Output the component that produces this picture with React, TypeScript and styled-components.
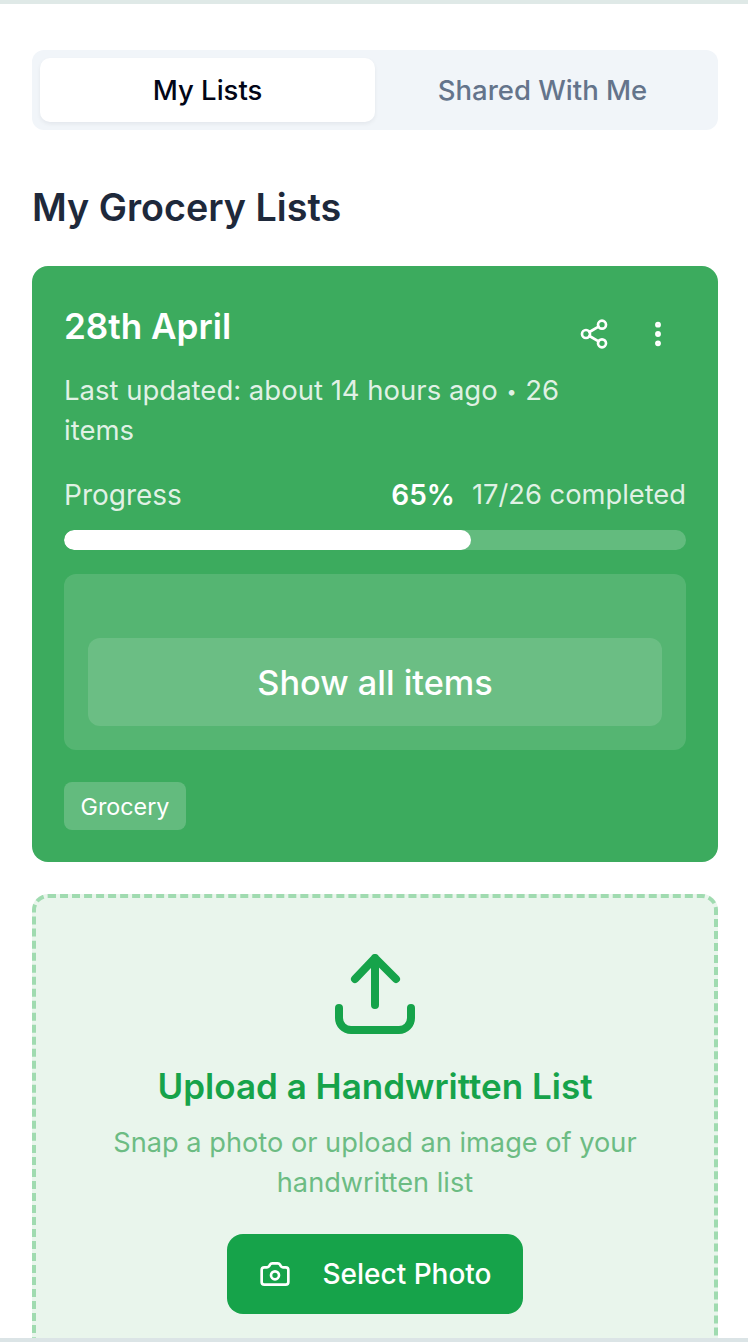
import { createGlobalStyle, styled } from 'styled-components';
import { Camera, EllipsisVertical, Share2 } from 'lucide-react';

const Global = createGlobalStyle`
  html, body {
    margin: 0;
    padding: 0;
    height: 1342px;
    overflow: hidden;
    background: #fff;
  }
  * {
    box-sizing: border-box;
  }
  body {
    font-family: Inter, "Liberation Sans", sans-serif;
  }
`;

export default function App() {
  return (
    <Page>
      <Global />
      <TopEdge />
      <Main>
        <Tabs>
          <Tab $active>My Lists</Tab>
          <Tab>Shared With Me</Tab>
        </Tabs>
        <Heading>My Grocery Lists</Heading>
        <ListCard>
          <CardHead>
            <CardTitle>28th April</CardTitle>
            <CardActions>
              <Share2 size={32} strokeWidth={2} />
              <EllipsisVertical size={32} strokeWidth={2.4} />
            </CardActions>
          </CardHead>
          <Meta>
            Last updated: about 14 hours ago <Dot>•</Dot> 26 items
          </Meta>
          <ProgressRow>
            <span>Progress</span>
            <ProgressStats>
              <strong>65%</strong>
              <span>17/26 completed</span>
            </ProgressStats>
          </ProgressRow>
          <Track>
            <Fill style={{ width: `${(17 / 26) * 100}%` }} />
          </Track>
          <ItemsPanel>
            <ShowAll>Show all items</ShowAll>
          </ItemsPanel>
          <Tag>Grocery</Tag>
        </ListCard>
        <UploadBox>
          <UploadIcon viewBox="0 0 80 80" fill="none">
            <path
              d="M40 51V4M20 25 40 4l21 21"
              stroke="#16a34a"
              strokeWidth="8"
              strokeLinecap="round"
              strokeLinejoin="round"
            />
            <path
              d="M4 54v10a12 12 0 0 0 12 12h48a12 12 0 0 0 12-12V54"
              stroke="#16a34a"
              strokeWidth="8"
              strokeLinecap="round"
            />
          </UploadIcon>
          <UploadTitle>Upload a Handwritten List</UploadTitle>
          <UploadText>Snap a photo or upload an image of your handwritten list</UploadText>
          <PhotoButton>
            <Camera size={32} strokeWidth={2} />
            Select Photo
          </PhotoButton>
        </UploadBox>
      </Main>
      <BottomEdge />
    </Page>
  );
}

const Page = styled.div`
  position: relative;
  width: 748px;
  height: 1342px;
  overflow: hidden;
  background: #fff;
`;
const TopEdge = styled.div`
  height: 4px;
  background: #dfe9e7;
`;
const BottomEdge = styled.div`
  position: absolute;
  left: 0;
  right: 0;
  bottom: 0;
  height: 4px;
  background: #dbe4e6;
`;
const Main = styled.main`
  padding: 46px 30px 0 32px;
`;
const Tabs = styled.div`
  display: grid;
  grid-template-columns: 1fr 1fr;
  height: 80px;
  padding: 8px;
  background: #f1f5f9;
  border-radius: 12px;
`;
const Tab = styled.div<{ $active?: boolean }>`
  display: flex;
  align-items: center;
  justify-content: center;
  border-radius: 10px;
  font-size: 27.5px;
  font-weight: 500;
  color: ${(p) => (p.$active ? '#020617' : '#64748b')};
  background: ${(p) => (p.$active ? '#fff' : 'transparent')};
  box-shadow: ${(p) => (p.$active ? '0 2px 4px rgba(15, 23, 42, 0.06)' : 'none')};
`;
const Heading = styled.h1`
  margin: 52px 0 34px;
  font-size: 37.7px;
  line-height: 50px;
  font-weight: 600;
  color: #1e293b;
`;
const ListCard = styled.section`
  height: 596px;
  padding: 32px;
  background: #3cab5e;
  border-radius: 16px;
  color: #fff;
`;
const CardHead = styled.div`
  display: flex;
  justify-content: space-between;
  align-items: flex-start;
  height: 72px;
`;
const CardTitle = styled.h2`
  margin: 4px 0 0;
  font-size: 35.1px;
  line-height: 48px;
  font-weight: 600;
`;
const CardActions = styled.div`
  display: flex;
  gap: 32px;
  padding: 20px 12px 0 0;
`;
const Meta = styled.p`
  width: 510px;
  margin: 0 0 24px;
  font-size: 27.5px;
  line-height: 40px;
  color: rgba(255, 255, 255, 0.85);
`;
const Dot = styled.span`
  font-size: 18px;
  line-height: 1;
  margin: 0 1px;
  vertical-align: 2px;
`;
const ProgressRow = styled.div`
  display: flex;
  justify-content: space-between;
  align-items: center;
  height: 40px;
  padding-top: 2px;
  font-size: 28px;
  color: rgba(255, 255, 255, 0.85);
`;
const ProgressStats = styled.div`
  display: flex;
  gap: 17px;
  font-size: 27.3px;
  strong {
    font-size: 28px;
    font-weight: 600;
    color: #fff;
  }
`;
const Track = styled.div`
  height: 20px;
  margin-top: 16px;
  background: rgba(255, 255, 255, 0.2);
  border-radius: 10px;
  overflow: hidden;
`;
const Fill = styled.div`
  height: 100%;
  background: #fff;
  border-radius: 10px;
`;
const ItemsPanel = styled.div`
  height: 176px;
  margin-top: 24px;
  padding: 64px 24px 24px;
  background: rgba(255, 255, 255, 0.13);
  border-radius: 12px;
`;
const ShowAll = styled.div`
  display: flex;
  align-items: center;
  justify-content: center;
  height: 88px;
  background: rgba(255, 255, 255, 0.13);
  border-radius: 12px;
  font-size: 34.3px;
  font-weight: 500;
`;
const Tag = styled.span`
  display: inline-flex;
  align-items: center;
  height: 48px;
  margin-top: 32px;
  padding: 0 16.5px;
  background: rgba(255, 255, 255, 0.2);
  border-radius: 8px;
  font-size: 23.3px;
`;
const UploadBox = styled.section`
  display: flex;
  flex-direction: column;
  align-items: center;
  height: 500px;
  margin-top: 32px;
  padding: 56px 48px 0;
  background: #e9f5ec;
  border: 4px dashed #a0dbb0;
  border-radius: 16px;
`;
const UploadIcon = styled.svg`
  width: 80px;
  height: 80px;
`;
const UploadTitle = styled.h2`
  margin: 28px 0 13px;
  font-size: 35px;
  line-height: 48px;
  font-weight: 600;
  color: #16a34a;
`;
const UploadText = styled.p`
  margin: 0 0 31px;
  text-align: center;
  font-size: 27.2px;
  line-height: 40px;
  color: #6cbc83;
`;
const PhotoButton = styled.button`
  display: flex;
  align-items: center;
  gap: 31px;
  height: 80px;
  padding: 0 31px 0 32px;
  border: 0;
  border-radius: 16px;
  background: #16a34a;
  color: #fff;
  font-family: inherit;
  font-size: 28px;
  font-weight: 500;
`;
